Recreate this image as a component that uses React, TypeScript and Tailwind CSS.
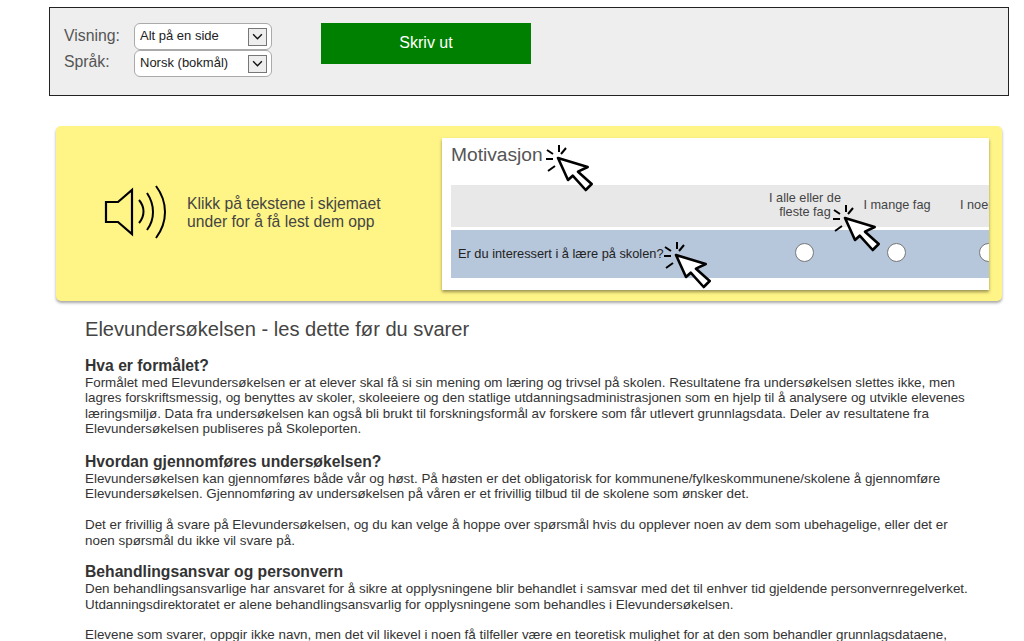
const font = { fontFamily: '"Liberation Sans", Arial, sans-serif' };

function Cursor({ className }: { className: string }) {
  return (
    <svg viewBox="0 0 50 50" className={`absolute w-[50px] h-[50px] ${className}`} fill="none">
      <g stroke="#000" strokeWidth="2">
        <path d="M1 15H8M2 6L8 10M14 1V8M21 4L16 10M3 27L10 22" />
        <path d="M13 14L23 36L27.7 31.7L40.7 46L46.7 40L33 27.7L42.7 23Z" fill="#fff" strokeWidth="2.6" strokeLinejoin="round" />
      </g>
    </svg>
  );
}

function Select({ label }: { label: string }) {
  return (
    <div className="w-[138px] h-[27px] bg-white border border-[#aaa] rounded-[6px] flex items-center justify-between pl-[5px] pr-[4px]">
      <span className="text-[13px] leading-[15px] text-[#222] mb-[2px]">{label}</span>
      <span className="w-[19px] h-[18px] bg-[#eee] border border-[#777] flex items-center justify-center">
        <svg viewBox="0 0 12 8" className="w-[11px] h-[7px]" fill="none" stroke="#111" strokeWidth="1.6">
          <path d="M1 1.5L6 6.5L11 1.5" />
        </svg>
      </span>
    </div>
  );
}

function H({ children }: { children: React.ReactNode }) {
  return <h2 className="text-[15.7px] font-bold leading-[18px] text-[#333]">{children}</h2>;
}

function P({ children, className = "" }: { children: React.ReactNode; className?: string }) {
  return <p className={`text-[13.4px] leading-[15.4px] text-[#333] whitespace-nowrap ${className}`}>{children}</p>;
}

export default function App() {
  return (
    <div style={font} className="w-[1024px] h-[641px] overflow-hidden bg-white pt-[7px]">
      <div className="ml-[49px] w-[960px] h-[89px] border border-[#222] bg-[#eee] flex pl-[14px] pt-[15px]">
        <div className="w-[70px] text-[15.8px] text-[#555] leading-[26px]">
          <div>Visning:</div>
          <div>Språk:</div>
        </div>
        <div>
          <Select label="Alt på en side" />
          <Select label="Norsk (bokmål)" />
        </div>
        <div className="ml-[49px] w-[210px] h-[41px] bg-[#008000] text-white text-[16px] flex items-center justify-center pb-[2px]">
          Skriv ut
        </div>
      </div>

      <div className="ml-[56px] mt-[30px] w-[946px] h-[175px] bg-[#fff486] rounded-[5px] shadow-[0_2px_3px_rgba(0,0,0,0.35)] flex pt-[12px]">
        <div className="w-[386px] h-[152px] flex items-start">
          <svg viewBox="0 0 64 54" className="w-[64px] h-[54px] ml-[48px] mt-[47px]" fill="none" stroke="#000" strokeWidth="2">
            <path d="M2 17H14L28 5V49L14 37H2Z" strokeWidth="2.2" />
            <path d="M35 15C41 22 41 31 35 38" />
            <path d="M43 8C51 20 51 34 43 45" />
            <path d="M52 1C64 17 64 37 52 53" />
          </svg>
          <div className="ml-[19px] mt-[57px] text-[15.7px] leading-[18px] text-[#444] whitespace-nowrap">
            Klikk på tekstene i skjemaet
            <br />
            under for å få lest dem opp
          </div>
        </div>
        <div className="relative w-[547px] h-[152px] bg-white shadow-[0_2px_3px_rgba(0,0,0,0.4)] pl-[9px] overflow-hidden">
          <div className="text-[19.2px] leading-[20px] text-[#555] pt-[7px] h-[47px]">Motivasjon</div>
          <div className="h-[42px] bg-[#e8e8e8] flex pl-[308px] text-[12.7px] leading-[14px] text-[#444] text-center items-center pb-[2px]">
            <div className="w-[92px] shrink-0">I alle eller de<br />fleste fag</div>
            <div className="w-[92px] shrink-0">I mange fag</div>
            <div className="w-[92px] shrink-0 text-left pl-[17px]">I noen fag</div>
          </div>
          <div className="mt-[3px] h-[48px] bg-[#b6c6db] flex items-center text-[12.8px] text-[#222]">
            <div className="w-[308px] shrink-0 pl-[7px]">Er du interessert i å lære på skolen?</div>
            {[0, 1, 2].map((i) => (
              <div key={i} className="w-[92px] shrink-0 flex justify-center pr-[1px] pb-[3px]">
                <div className="w-[19px] h-[19px] rounded-full bg-white border-[1.5px] border-[#777]" />
              </div>
            ))}
          </div>
          <Cursor className="left-[103px] top-[6px]" />
          <Cursor className="left-[221px] top-[103px]" />
          <Cursor className="left-[390px] top-[66px]" />
        </div>
      </div>

      <div className="ml-[85px] mt-[18px]">
        <h1 className="text-[20.1px] leading-[21px] text-[#444]">Elevundersøkelsen - les dette før du svarer</h1>
        <div className="mt-[17px]"><H>Hva er formålet?</H></div>
        <P>
          Formålet med Elevundersøkelsen er at elever skal få si sin mening om læring og trivsel på skolen. Resultatene fra undersøkelsen slettes ikke, men<br />
          lagres forskriftsmessig, og benyttes av skoler, skoleeiere og den statlige utdanningsadministrasjonen som en hjelp til å analysere og utvikle elevenes<br />
          læringsmiljø. Data fra undersøkelsen kan også bli brukt til forskningsformål av forskere som får utlevert grunnlagsdata. Deler av resultatene fra<br />
          Elevundersøkelsen publiseres på Skoleporten.
        </P>
        <div className="mt-[16px]"><H>Hvordan gjennomføres undersøkelsen?</H></div>
        <P>
          Elevundersøkelsen kan gjennomføres både vår og høst. På høsten er det obligatorisk for kommunene/fylkeskommunene/skolene å gjennomføre<br />
          Elevundersøkelsen. Gjennomføring av undersøkelsen på våren er et frivillig tilbud til de skolene som ønsker det.
        </P>
        <P className="mt-[16px]">
          Det er frivillig å svare på Elevundersøkelsen, og du kan velge å hoppe over spørsmål hvis du opplever noen av dem som ubehagelige, eller det er<br />
          noen spørsmål du ikke vil svare på.
        </P>
        <div className="mt-[15px]"><H>Behandlingsansvar og personvern</H></div>
        <P>
          Den behandlingsansvarlige har ansvaret for å sikre at opplysningene blir behandlet i samsvar med det til enhver tid gjeldende personvernregelverket.<br />
          Utdanningsdirektoratet er alene behandlingsansvarlig for opplysningene som behandles i Elevundersøkelsen.
        </P>
        <P className="mt-[15px]">
          Elevene som svarer, oppgir ikke navn, men det vil likevel i noen få tilfeller være en teoretisk mulighet for at den som behandler grunnlagsdataene,
        </P>
      </div>
    </div>
  );
}
